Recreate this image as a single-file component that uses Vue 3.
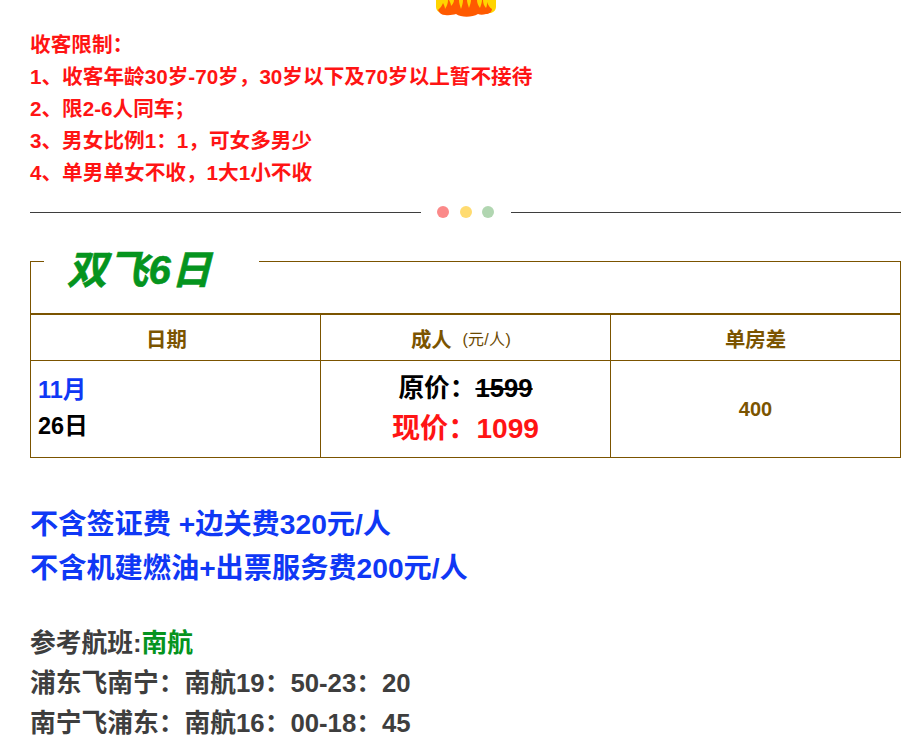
<template>
  <div class="page">
    <div class="flame-wrap">
      <svg class="flame" width="60" height="18" viewBox="0 0 60 18">
        <path fill="#ffd400" d="M0 0H60V7C60 10 58 12 55 13H5C2 12 0 10 0 7Z"/>
        <path fill="#ff5a00" d="M2 10C4 8 6 6 7 3C8 5 9 7 9 9C11 6 12 3 12 0H13C14 2 15 4 15 6C17 4 18 2 18 0H23C23 3 24 6 25 9C26 6 27 3 27 0H31C31 2 32 5 33 8C34 5 35 2 35 0H41C41 3 42 5 44 8C45 5 46 2 46 0H47C47 3 48 6 50 8C51 6 51 4 51 2C52 5 54 8 56 9C56 12 53 14 50 14C47 15 44 15 42 14C36 17.5 25 17.5 20 14C17 15 13 15.5 9 15C6 15 3 13 2 10Z"/>
      </svg>
    </div>
    <div class="limits">
      <p>收客限制：</p>
      <p>1、收客年龄30岁-70岁，30岁以下及70岁以上暂不接待</p>
      <p>2、限2-6人同车；</p>
      <p>3、男女比例1：1，可女多男少</p>
      <p>4、单男单女不收，1大1小不收</p>
    </div>
    <div class="divider">
      <span class="rule"></span>
      <span class="dots"><i class="d1"></i><i class="d2"></i><i class="d3"></i></span>
      <span class="rule"></span>
    </div>
    <div class="title-box">
      <h2 class="title">双飞6日</h2>
    </div>
    <div class="table">
      <div class="cell head first">日期</div>
      <div class="cell head second">成人 <small>(元/人)</small></div>
      <div class="cell head">单房差</div>
      <div class="cell date">
        <p class="month">11月</p>
        <p class="day">26日</p>
      </div>
      <div class="cell price">
        <p class="old">原价：<s>1599</s></p>
        <p class="now">现价：1099</p>
      </div>
      <div class="cell extra">400</div>
    </div>
    <div class="fees">
      <p>不含签证费 +边关费320元/人</p>
      <p>不含机建燃油+出票服务费200元/人</p>
    </div>
    <div class="flights">
      <p>参考航班:<span>南航</span></p>
      <p>浦东飞南宁：南航19：50-23：20</p>
      <p>南宁飞浦东：南航16：00-18：45</p>
    </div>
  </div>
</template>

<script setup>
</script>

<style>
html, body { margin: 0; background: #fff; overflow: hidden; }
</style>

<style scoped>
.page {
  width: 871px;
  height: 750px;
  overflow: hidden;
  padding: 0 21px 0 30px;
  font-family: "Liberation Sans", "Noto Sans CJK SC", sans-serif;
  font-weight: 700;
}
p { margin: 0; }
.flame-wrap { height: 29px; display: flex; justify-content: center; }
.flame { display: block; }
.limits { color: #ff1414; font-size: 20.65px; line-height: 32px; }
.divider { display: flex; align-items: center; gap: 16.5px; height: 32px; margin-top: 7px; }
.rule { flex: 1; height: 1px; background: #3e3e3e; }
.dots { display: flex; gap: 10.5px; }
.dots i { display: block; width: 12px; height: 12px; border-radius: 50%; }
.d1 { background: #fb8989; }
.d2 { background: #ffdb70; }
.d3 { background: #b1d6b1; }
.title-box {
  position: relative;
  height: 51px;
  margin-top: 33px;
  border: 1px solid #7b5400;
  border-bottom: 0;
}
.title {
  position: absolute;
  left: 13px;
  top: -21px;
  margin: 0;
  width: 215px;
  padding-left: 23px;
  box-sizing: border-box;
  background: #fff;
  color: #05941e;
  font-size: 40px;
  font-style: italic;
  line-height: 58px;
  height: 50px;
  letter-spacing: 0.7px;
  -webkit-text-stroke: 0.6px #05941e;
}
.table {
  display: grid;
  grid-template-columns: 290px 290px 290px;
  grid-template-rows: 46px 96px;
  border-top: 2px solid #7b5400;
  border-bottom: 1px solid #7b5400;
  border-left: 1px solid #7b5400;
  box-sizing: border-box;
  height: 145px;
}
.cell {
  border-right: 1px solid #7b5400;
  box-sizing: border-box;
  display: flex;
  align-items: center;
  justify-content: center;
}
.head {
  color: #7b5400;
  font-size: 20.4px;
  border-bottom: 1px solid #7b5400;
  white-space: pre;
}
.head.first { padding-right: 18px; }
.head.second { padding-right: 9px; }
.head small { font-size: 16px; font-weight: 400; margin-left: 5px; letter-spacing: 0.3px; color: #6b4900; }
.date { display: block; padding: 11px 0 0 7px; font-size: 23.5px; line-height: 36px; }
.month { color: #0f38f5; }
.day { color: #000; }
.price { flex-direction: column; }
.old { color: #000; font-size: 25.7px; line-height: 39px; }
.now { color: #ff1414; font-size: 28.15px; line-height: 42px; }
.extra { color: #7b5400; font-size: 20px; padding-top: 1px; }
.fees { margin-top: 44px; color: #0f38f5; font-size: 28.2px; line-height: 44px; }
.flights { margin-top: 33px; color: #3e3e3e; font-size: 25.76px; line-height: 40px; }
.flights span { color: #05941e; }
</style>
